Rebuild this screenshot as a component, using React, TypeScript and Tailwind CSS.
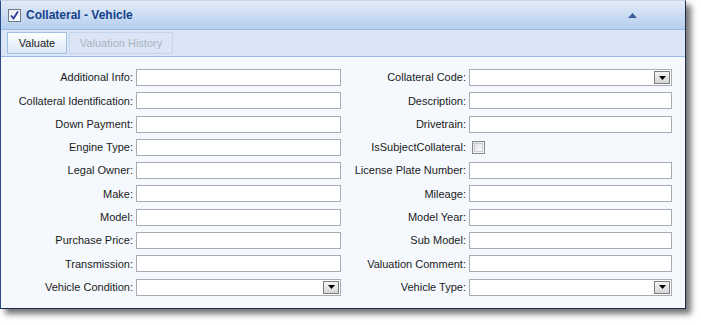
import React from "react";

const rows: [string, string, string, string][] = [
  ["Additional Info:", "text", "Collateral Code:", "select"],
  ["Collateral Identification:", "text", "Description:", "text"],
  ["Down Payment:", "text", "Drivetrain:", "text"],
  ["Engine Type:", "text", "IsSubjectCollateral:", "check"],
  ["Legal Owner:", "text", "License Plate Number:", "text"],
  ["Make:", "text", "Mileage:", "text"],
  ["Model:", "text", "Model Year:", "text"],
  ["Purchase Price:", "text", "Sub Model:", "text"],
  ["Transmission:", "text", "Valuation Comment:", "text"],
  ["Vehicle Condition:", "select", "Vehicle Type:", "select"],
];

function Field({ kind, w }: { kind: string; w: string }) {
  if (kind === "check") {
    return (
      <div className="h-[17px] flex items-center">
        <div className="ml-[3px] w-[13px] h-[13px] border border-[#8a8a8a] bg-gradient-to-br from-[#d9dce0] to-[#ffffff] p-[1px]">
          <div className="w-full h-full border border-[#c9ccd1] bg-gradient-to-br from-[#e3e5e8] to-[#fbfbfc]" />
        </div>
      </div>
    );
  }
  return (
    <div className={`${w} h-[17px] border border-[#a5acb5] bg-white flex justify-end items-stretch`}>
      {kind === "select" && (
        <div className="w-[16px] m-[1px] border border-[#7d7d7d] bg-gradient-to-b from-[#f4f4f4] to-[#d5d5d5] flex items-center justify-center">
          <svg width="7" height="4" viewBox="0 0 7 4">
            <path d="M0 0 H7 L3.5 4 Z" fill="#000" />
          </svg>
        </div>
      )}
    </div>
  );
}

export default function App() {
  return (
    <div className="w-[701px] h-[325px] bg-white" style={{ fontFamily: '"Liberation Sans", Arial, sans-serif' }}>
      <div className="w-[686px] h-[309px] border border-[#1e2b45] border-l-[#2a4a8a] border-t-[#c9d3e0] bg-[#f5f9fe] shadow-[5px_5px_6px_rgba(0,0,0,0.55)] flex flex-col">
        <div className="h-[29px] bg-gradient-to-b from-[#e2ebf8] to-[#b6ceee] border-b border-[#99bbe8] flex items-center pl-[7px] pr-[48px]">
          <div className="w-[13px] h-[13px] border border-[#6f7a8a] bg-gradient-to-br from-[#e6e9ee] to-white flex items-center justify-center">
            <svg width="11" height="11" viewBox="0 0 11 11">
              <path d="M2 5.5 L4.5 8.5 L9 1.5" stroke="#2a3a9a" strokeWidth="1.8" fill="none" />
            </svg>
          </div>
          <span className="ml-[5px] text-[12px] font-bold text-[#15428b]">Collateral - Vehicle</span>
          <div className="flex-1" />
          <svg width="9" height="5" viewBox="0 0 9 5">
            <path d="M0 5 L4.5 0 L9 5 Z" fill="#3b5c9a" />
          </svg>
        </div>
        <div className="h-[27px] bg-[#dbe5f5] border-b border-[#99bbe8] flex items-center pl-[6px] gap-[2px]">
          <div className="h-[22px] w-[60px] border border-[#9fc0e8] bg-gradient-to-b from-[#ffffff] to-[#dbe6f5] flex items-center justify-center text-[11px] text-[#1b1b1b]">
            Valuate
          </div>
          <div className="h-[22px] w-[104px] border border-[#c2d6f0] flex items-center justify-center text-[11px] text-[#aab3c2]">
            Valuation History
          </div>
        </div>
        <div className="flex-1 pt-[12px] flex flex-col gap-[6.3px] text-[11px] text-[#1b1b1b]">
          {rows.map(([l1, k1, l2, k2]) => (
            <div key={l1} className="flex items-center h-[17px]">
              <div className="w-[132px] text-right whitespace-nowrap">{l1}</div>
              <div className="ml-[3px]">
                <Field kind={k1} w="w-[205px]" />
              </div>
              <div className="w-[125px] text-right whitespace-nowrap">{l2}</div>
              <div className="ml-[3px]">
                <Field kind={k2} w="w-[203px]" />
              </div>
            </div>
          ))}
        </div>
      </div>
    </div>
  );
}
